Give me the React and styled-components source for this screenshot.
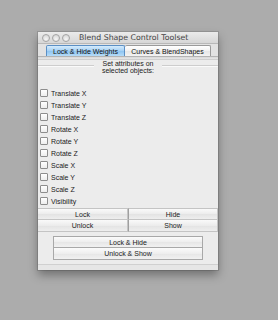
import styled, { createGlobalStyle } from "styled-components";

const GlobalStyle = createGlobalStyle`
  html, body {
    margin: 0;
    padding: 0;
    background: #acacac;
  }
  body {
    font-family: "Liberation Sans", Arial, sans-serif;
    color: #1a1a1a;
  }
`;

const Page = styled.div`
  width: 278px;
  height: 320px;
  padding: 32px 0 0 38px;
  box-sizing: border-box;
`;

const Window = styled.div`
  width: 180px;
  height: 238px;
  display: flex;
  flex-direction: column;
  background: #ececec;
  box-shadow: 0 5px 9px rgba(0, 0, 0, 0.35), 0 0 0 1px rgba(0, 0, 0, 0.12);
  box-sizing: border-box;
`;

const TitleBar = styled.div`
  height: 12px;
  display: flex;
  align-items: center;
  gap: 2px;
  padding-left: 4px;
  box-sizing: border-box;
  background: linear-gradient(#ebebeb, #d6d6d6);
  border-bottom: 1px solid #b8b8b8;
`;

const Light = styled.span`
  width: 8px;
  height: 8px;
  border-radius: 50%;
  box-sizing: border-box;
  border: 1px solid #a4a4a4;
  background: radial-gradient(circle at 50% 70%, #f6f6f6, #d0d0d0);
`;

const Title = styled.span`
  margin-left: 7px;
  font-family: "DejaVu Sans", sans-serif;
  font-size: 7.8px;
  color: #444;
  white-space: nowrap;
`;

const TabBar = styled.div`
  height: 13px;
  display: flex;
  padding: 1px 0 0 8px;
  box-sizing: border-box;
  background: #e2e2e2;
  border-bottom: 1px solid #b3b3b3;
`;

const Tab = styled.div`
  width: ${(p) => p.$w}px;
  display: flex;
  align-items: center;
  justify-content: center;
  box-sizing: border-box;
  font-size: 7px;
  color: #111;
  white-space: nowrap;
  border: 1px solid ${(p) => (p.$active ? "#5b8fc4" : "#9a9a9a")};
  border-bottom: none;
  border-left: ${(p) => (p.$active ? "1px solid #5b8fc4" : "none")};
  border-radius: 2px 2px 0 0;
  background: ${(p) =>
    p.$active
      ? "linear-gradient(#d4ebfc, #a4d0f5 50%, #8ec4f1 51%, #b6dcf8)"
      : "linear-gradient(#ffffff, #f1f1f1 50%, #e6e6e6 51%, #f3f3f3)"};
`;

const Strip = styled.div`
  height: 2px;
  background: linear-gradient(#d8d8d8, #e6e6e6);
  border-bottom: 1px solid #cfcfcf;
`;

const Group = styled.div`
  display: grid;
  grid-template-columns: 1fr auto 1fr;
  align-items: center;
`;

const Rule = styled.div`
  height: 1px;
  background: #cdcdcd;
  border-bottom: 1px solid #fafafa;
  margin: 0 ${(p) => (p.$side === "left" ? "6px 0 0" : "0 0 6px")};
  align-self: center;
  transform: translateY(-1px);
`;

const GroupText = styled.div`
  font-size: 7px;
  line-height: 7px;
  text-align: center;
  color: #222;
  padding: 0 2px;
`;

const CheckList = styled.div`
  display: flex;
  flex-direction: column;
  padding: 13px 0 0 2px;
`;

const CheckRow = styled.label`
  height: 12px;
  display: flex;
  align-items: center;
  gap: 3px;
  font-size: 7px;
  color: #1a1a1a;
`;

const Box = styled.span`
  width: 8px;
  height: 8px;
  box-sizing: border-box;
  border: 1px solid #8d8d8d;
  border-radius: 1px;
  background: linear-gradient(#ffffff, #ededed);
`;

const ButtonGrid = styled.div`
  display: grid;
  grid-template-columns: 90px 90px;
  margin-top: 1px;
`;

const GridButton = styled.div`
  height: 12px;
  display: flex;
  align-items: center;
  justify-content: center;
  box-sizing: border-box;
  font-size: 7px;
  color: #222;
  border: 1px solid #c4c4c4;
  border-left: ${(p) => (p.$right ? "1px solid #9f9f9f" : "none")};
  border-top: ${(p) => (p.$top ? "1px solid #c4c4c4" : "none")};
  background: linear-gradient(#fafafa, #ececec 50%, #e3e3e3 51%, #eeeeee);
`;

const WideStack = styled.div`
  display: flex;
  flex-direction: column;
  align-items: center;
  padding-top: 4px;
`;

const WideButton = styled.div`
  width: 150px;
  height: 12px;
  display: flex;
  align-items: center;
  justify-content: center;
  box-sizing: border-box;
  font-size: 7px;
  color: #222;
  border: 1px solid #a8a8a8;
  border-top: ${(p) => (p.$first ? "1px solid #a8a8a8" : "none")};
  background: linear-gradient(#fbfbfb, #eeeeee 50%, #e6e6e6 51%, #f1f1f1);
`;

const Footer = styled.div`
  margin-top: auto;
  height: 5px;
  border-top: 1px solid #d0d0d0;
  background: #e6e6e6;
`;

const attrs = [
  "Translate X",
  "Translate Y",
  "Translate Z",
  "Rotate X",
  "Rotate Y",
  "Rotate Z",
  "Scale X",
  "Scale Y",
  "Scale Z",
  "Visibility",
];

export default function App() {
  return (
    <Page>
      <GlobalStyle />
      <Window>
        <TitleBar>
          <Light />
          <Light />
          <Light />
          <Title>Blend Shape Control Toolset</Title>
        </TitleBar>
        <TabBar>
          <Tab $active $w={79}>Lock &amp; Hide Weights</Tab>
          <Tab $w={86}>Curves &amp; BlendShapes</Tab>
        </TabBar>
        <Strip />
        <Group>
          <Rule $side="left" />
          <GroupText>
            Set attributes on
            <br />
            selected objects:
          </GroupText>
          <Rule $side="right" />
        </Group>
        <CheckList>
          {attrs.map((a) => (
            <CheckRow key={a}>
              <Box />
              {a}
            </CheckRow>
          ))}
        </CheckList>
        <ButtonGrid>
          <GridButton $top>Lock</GridButton>
          <GridButton $top $right>Hide</GridButton>
          <GridButton>Unlock</GridButton>
          <GridButton $right>Show</GridButton>
        </ButtonGrid>
        <WideStack>
          <WideButton $first>Lock &amp; Hide</WideButton>
          <WideButton>Unlock &amp; Show</WideButton>
        </WideStack>
        <Footer />
      </Window>
    </Page>
  );
}
